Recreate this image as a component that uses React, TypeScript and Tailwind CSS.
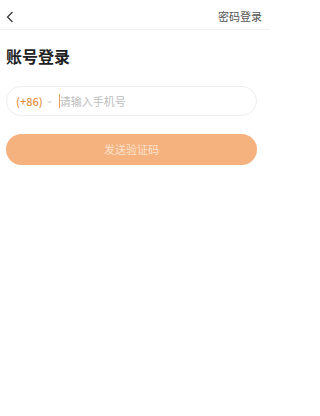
import React from "react";

export default function App() {
  return (
    <div className="w-[270px] h-[416px] bg-white" style={{ fontFamily: '"Noto Sans CJK SC", "Noto Sans", sans-serif' }}>
      <div className="h-[30px] flex items-center justify-between pl-[6px] pr-[8px] border-b border-[#f3f3f3]">
        <svg width="8" height="12" viewBox="0 0 8 12" className="mt-[4px]">
          <path d="M6.5 1 L1.5 6 L6.5 11" fill="none" stroke="#333" strokeWidth="1.2" />
        </svg>
        <span className="text-[11px] text-[#555] mt-[4px] leading-none">密码登录</span>
      </div>
      <div className="pl-[6px]">
        <h1 className="mt-[15px] text-[16px] font-bold text-[#222] leading-[22px]">账号登录</h1>
        <div className="mt-[19px] w-[251px] h-[30px] rounded-full border border-[#eeeeee] flex items-center pl-[9px]">
          <span className="text-[11px] font-medium text-[#e0913f] leading-none">(+86)</span>
          <svg width="5" height="4" viewBox="0 0 5 4" className="ml-[4px] mt-[1px]">
            <path d="M0.5 0.8 L2.5 3 L4.5 0.8" fill="none" stroke="#bbb" strokeWidth="0.8" />
          </svg>
          <span className="ml-[7px] w-px h-[14px] bg-[#e7a25c]" />
          <span className="text-[11px] text-[#bdbdbd] leading-none">请输入手机号</span>
        </div>
        <button className="mt-[18px] w-[251px] h-[31px] rounded-full bg-[#f5b17e] text-[11px] text-[#fce3cd] flex items-center justify-center">
          发送验证码
        </button>
      </div>
    </div>
  );
}
